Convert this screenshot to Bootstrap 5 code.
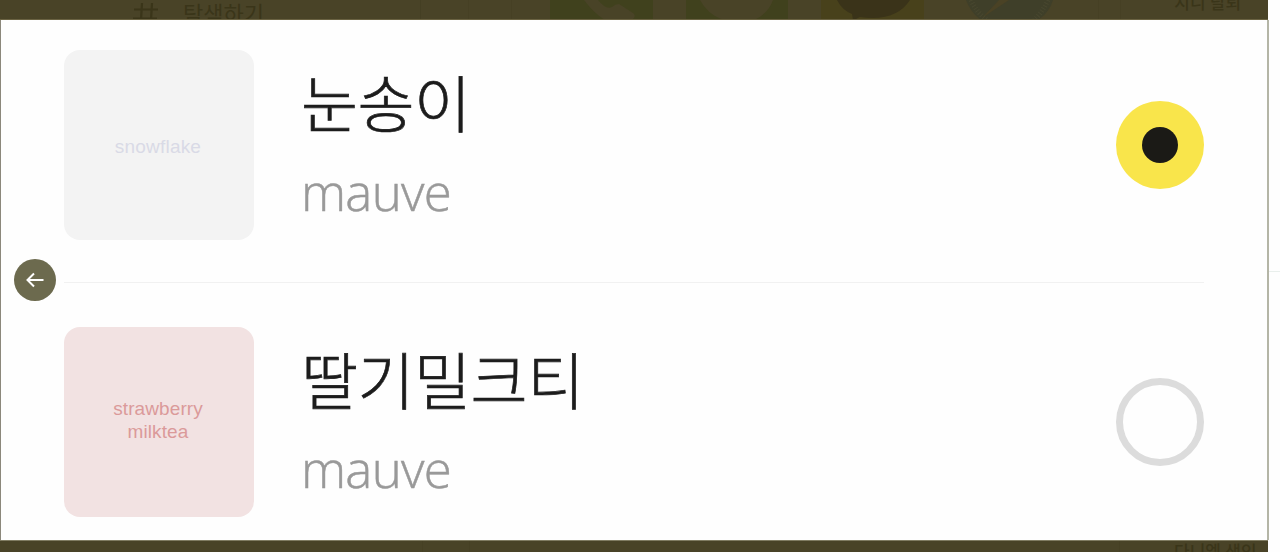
<!DOCTYPE html>
<html lang="ko">
<head>
  <meta charset="UTF-8" />
  <title>컬러 선택</title>
  <meta name="viewport" content="width=device-width, initial-scale=1" />
  <link href="https://cdn.jsdelivr.net/npm/bootstrap@5.3.3/dist/css/bootstrap.min.css" rel="stylesheet">
  <style>
    body {
      height: 552px;
      background: #fefefe;
      font-family: "Open Sans", "Noto Sans CJK KR", sans-serif;
    }
    .viewer {
      width: 1269px;
    }
    .strip {
      background: #494327;
      color: #3a3519;
      line-height: 1;
      margin-right: 1px;
    }
    .strip-top {
      height: 20px;
      border-bottom: 1px solid #6a6242;
    }
    .strip-bottom {
      height: 12px;
      border-top: 1px solid #807c62;
    }
    .strip svg {
      flex: none;
    }
    .side-link {
      width: 422px;
      padding-left: 133px;
      gap: 24px;
      font-size: 22px;
      border-right: 1px solid #443f23;
    }
    .side-link span {
      padding-top: 2px;
    }
    .rail-name {
      width: 94px;
      font-size: 17px;
      font-weight: 500;
      white-space: nowrap;
    }
    .rail-name.up {
      margin-top: -6px;
    }
    .rail-name.down {
      padding-top: 2px;
    }
    .sheet {
      height: 520px;
      background: #fefefe;
      border-left: 1px solid #8b887b;
      border-right: 2px solid #b4b5a6;
      padding: 30px 63px 0 63px;
    }
    .option {
      height: 190px;
    }
    .swatch {
      width: 190px;
      height: 190px;
      border-radius: 16px;
      padding-right: 2px;
      font-family: "Liberation Sans", sans-serif;
      font-size: 19px;
      line-height: 23px;
      letter-spacing: .2px;
    }
    .swatch-snow {
      background: #f3f3f3;
      color: #d9dae6;
      padding-top: 2px;
    }
    .swatch-berry {
      background: #f2e2e2;
      color: #db9a9a;
      padding-bottom: 4px;
      letter-spacing: .1px;
    }
    .option-text {
      margin-left: 47px;
    }
    .option-name {
      font-family: "Noto Sans CJK KR", sans-serif;
      font-size: 62px;
      font-weight: 300;
      line-height: 80px;
      letter-spacing: -.5px;
      color: #1c1c1c;
      -webkit-text-stroke: .7px #1c1c1c;
      margin-top: 11px;
    }
    .option-sub {
      font-size: 51px;
      font-weight: 300;
      line-height: 70px;
      letter-spacing: -.7px;
      color: #999;
      -webkit-text-stroke: .5px #999;
      margin-top: 15px;
    }
    .pick {
      width: 88px;
      height: 88px;
      margin-left: -1px;
    }
    .pick-on {
      background: #f9e54b;
    }
    .pick-on span {
      width: 36px;
      height: 36px;
      background: #1b1a16;
    }
    .pick-off {
      border: 7px solid #dcdcdc;
    }
    .rule {
      height: 1px;
      background: #f1f1f1;
      margin: 42px 0 44px;
    }
    .page-edge {
      width: 11px;
      height: 272px;
      border-bottom: 1px solid #e9efec;
    }
    .back-btn {
      left: 14px;
      top: 259px;
      width: 42px;
      height: 42px;
      background: #6c6a4e;
    }
  </style>
</head>
<body class="d-flex overflow-hidden position-relative">

<div class="viewer d-flex flex-column">
  <!-- Dimmed page behind the sheet -->
  <div class="strip strip-top d-flex overflow-hidden">
    <div class="side-link d-flex">
      <svg width="26" height="20" fill="none" stroke="#3a3519" stroke-width="2.2">
        <path d="M1 9.500H25M0 18.500H24M9 3L8 20M19 3L18 20" />
      </svg>
      <span>탐색하기</span>
    </div>
    <svg width="753" height="20">
      <path d="M47.500 0V20M90.500 0V20M677.500 0V20M699.500 0V20" stroke="#464024" />
      <path fill="#40411d" d="M129 0h103v20H129zM265 0h102v20H265z" />
      <path fill="#494327" d="M163 0C169 8 177 16 184 20H211Q216 16 212 13L198 4Q194 4 191 7Q185 10 177 0zM279 0Q287 15 303 20H333Q347 14 352 0z" />
      <path fill="#48411b" d="M400 0h103v20H400z" />
      <path fill="#3a3319" d="M416 0Q421 10 431 14L432 20H433Q437 18 439 17Q475 22 489 0z" />
      <g transform="translate(2 0)">
        <path fill="#3f3f29" d="M543 0Q548 13 558 20H615Q626 13 630 0z" />
        <path fill="#4a4225" d="M576 0L559 18L586 0z" />
        <path fill="none" stroke="#48472f" stroke-width="5" stroke-dasharray="1 2" d="M548 0Q554 13 564 20M625 0Q619 13 611 20" />
      </g>
    </svg>
    <div class="rail-name up">지니 탈퇴</div>
  </div>

  <!-- Colour options -->
  <div class="sheet">
    <div class="option d-flex">
      <div class="swatch swatch-snow d-flex align-items-center justify-content-center text-center">snowflake</div>
      <div class="option-text flex-grow-1">
        <div class="option-name">눈송이</div>
        <div class="option-sub">mauve</div>
      </div>
      <div class="pick pick-on rounded-circle d-flex align-items-center justify-content-center align-self-center">
        <span class="rounded-circle"></span>
      </div>
    </div>
    <div class="rule"></div>
    <div class="option d-flex">
      <div class="swatch swatch-berry d-flex align-items-center justify-content-center text-center">strawberry<br>milktea</div>
      <div class="option-text flex-grow-1">
        <div class="option-name">딸기밀크티</div>
        <div class="option-sub">mauve</div>
      </div>
      <div class="pick pick-off rounded-circle align-self-center"></div>
    </div>
  </div>

  <div class="strip strip-bottom d-flex overflow-hidden">
    <svg width="1174" height="12">
      <path d="M422.500 0V12M469.500 0V12M1119.500 0V12" stroke="#464024" />
    </svg>
    <div class="rail-name down">다니엘 색인</div>
  </div>
</div>

<div class="page-edge"></div>

<button type="button" aria-label="뒤로" class="back-btn position-absolute rounded-circle border-0 p-0 d-flex align-items-center justify-content-center">
  <svg width="18" height="16" fill="none" stroke="#fff" stroke-width="2">
    <path d="M8 1.500L1.500 8L8 14.500M1.500 8H17.500" />
  </svg>
</button>

<script src="https://cdn.jsdelivr.net/npm/bootstrap@5.3.3/dist/js/bootstrap.bundle.min.js"></script>
</body>
</html>
